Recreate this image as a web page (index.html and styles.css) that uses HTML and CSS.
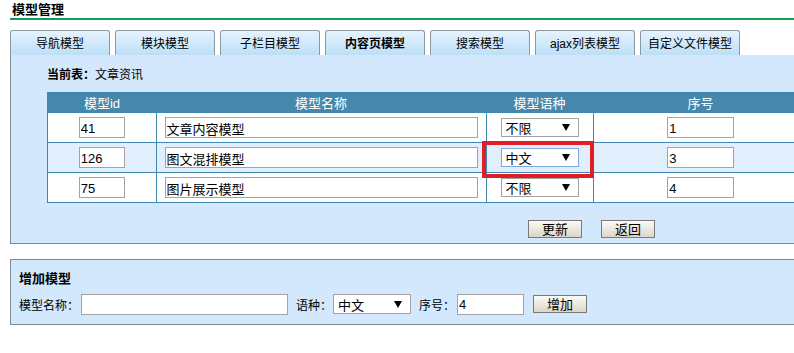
FILE: index.html
```html
<!DOCTYPE html>
<html lang="zh-CN">
<head>
    <meta charset="UTF-8">
    <meta name="viewport" content="width=device-width, initial-scale=1.0">
    <title>模型管理</title>
    <link rel="stylesheet" href="styles.css">
</head>
<body>
    <div class="page">
        <div class="title">模型管理</div>

        <div class="tabs">
            <div class="tab">导航模型</div>
            <div class="tab">模块模型</div>
            <div class="tab">子栏目模型</div>
            <div class="tab active">内容页模型</div>
            <div class="tab">搜索模型</div>
            <div class="tab">ajax列表模型</div>
            <div class="tab">自定义文件模型</div>
        </div>

        <div class="panel main-panel">
            <div class="current"><b>当前表：</b>文章资讯</div>

            <table class="grid">
                <tr>
                    <th class="c-id">模型id</th>
                    <th class="c-name">模型名称</th>
                    <th class="c-lang">模型语种</th>
                    <th class="c-seq">序号</th>
                </tr>
                <tr>
                    <td><input class="in-id" type="text" value="41"></td>
                    <td><input class="in-name" type="text" value="文章内容模型"></td>
                    <td><div class="select sel-row"><span>不限</span><svg width="8" height="7" viewBox="0 0 8 7"><path d="M0 0H8L4 7Z" fill="#000"/></svg></div></td>
                    <td><input class="in-seq" type="text" value="1"></td>
                </tr>
                <tr class="alt">
                    <td><input class="in-id" type="text" value="126"></td>
                    <td><input class="in-name" type="text" value="图文混排模型"></td>
                    <td class="marked">
                        <div class="select sel-row focus"><span>中文</span><svg width="8" height="7" viewBox="0 0 8 7"><path d="M0 0H8L4 7Z" fill="#000"/></svg></div>
                        <div class="red-box"></div>
                    </td>
                    <td><input class="in-seq" type="text" value="3"></td>
                </tr>
                <tr>
                    <td><input class="in-id" type="text" value="75"></td>
                    <td><input class="in-name" type="text" value="图片展示模型"></td>
                    <td><div class="select sel-row"><span>不限</span><svg width="8" height="7" viewBox="0 0 8 7"><path d="M0 0H8L4 7Z" fill="#000"/></svg></div></td>
                    <td><input class="in-seq" type="text" value="4"></td>
                </tr>
            </table>

            <div class="actions">
                <button class="btn">更新</button>
                <button class="btn">返回</button>
            </div>
        </div>

        <div class="panel add-panel">
            <div class="add-title">增加模型</div>
            <div class="add-row">
                <span>模型名称：</span>
                <input class="in-newname" type="text" value="">
                <span class="lbl">语种：</span>
                <div class="select sel-add"><span>中文</span><svg width="8" height="7" viewBox="0 0 8 7"><path d="M0 0H8L4 7Z" fill="#000"/></svg></div>
                <span class="lbl">序号：</span>
                <input class="in-newseq" type="text" value="4">
                <button class="btn btn-add">增加</button>
            </div>
        </div>
    </div>
</body>
</html>
```

FILE: styles.css
```css
body {
    margin: 0;
    font-family: "Liberation Sans", "Noto Sans CJK SC", sans-serif;
    font-size: 12px;
    color: #000;
    background-color: #fff;
    overflow: hidden;
}
.page {
    width: 860px;
    margin-left: 10px;
}
.title {
    height: 18px;
    line-height: 20px;
    padding-left: 2px;
    font-size: 13px;
    font-weight: bold;
    border-bottom: 2px solid #13985a;
}
.tabs {
    display: flex;
    gap: 5px;
    margin-top: 10px;
}
.tab {
    width: 98px;
    height: 24px;
    line-height: 26px;
    text-align: center;
    border: 1px solid #8c98a3;
    border-bottom: none;
    border-radius: 3px 3px 0 0;
    background: linear-gradient(#e6f3fd, #bcdff7);
}
.tab.active {
    font-weight: bold;
}
.panel {
    background-color: #d3e8fc;
    border-left: 1px solid #7f8790;
    border-bottom: 1px solid #7f8790;
}
.main-panel {
    padding: 10px 0 5px 36px;
}
.current {
    height: 20px;
    line-height: 20px;
    margin-bottom: 7px;
}
.grid {
    width: 762px;
    table-layout: fixed;
    border-collapse: collapse;
    border: 1px solid #3f88b4;
    font-size: 12px;
}
.grid th {
    height: 19px;
    padding: 0;
    background-color: #4588ab;
    color: #fff;
    font-weight: normal;
    font-size: 13px;
    text-align: center;
}
.grid td {
    height: 29px;
    padding: 0;
    text-align: center;
    background-color: #fff;
    border: 1px solid #3f88b4;
}
.grid tr.alt td {
    background-color: #e1effd;
}
.c-id { width: 108px; }
.c-name { width: 330px; }
.c-lang { width: 107px; }
input[type="text"] {
    box-sizing: border-box;
    height: 21px;
    padding: 1px 1px 0;
    border: 1px solid #a3a3a3;
    font-family: "Liberation Sans", "Noto Sans CJK SC", sans-serif;
    font-size: 13px;
    color: #000;
    background-color: #fff;
    vertical-align: middle;
}
.in-id { width: 46px; }
.in-name { width: 313px; }
.in-seq { width: 67px; }
.select {
    box-sizing: border-box;
    display: inline-flex;
    align-items: center;
    justify-content: space-between;
    height: 19px;
    padding: 0 8px 0 4px;
    border: 1px solid #a3a3a3;
    background-color: #fff;
    font-size: 13px;
    vertical-align: middle;
}
.sel-row { width: 78px; }
.select.focus {
    border-color: #7ea6d6;
}
.marked {
    position: relative;
}
.red-box {
    position: absolute;
    left: -5px;
    top: -2px;
    width: 104px;
    height: 29px;
    border: 4px solid #e11d27;
}
.actions {
    display: flex;
    gap: 19px;
    margin: 17px 0 0 481px;
}
.btn {
    width: 54px;
    height: 18px;
    padding: 0;
    border: 1px solid #7a7a7a;
    background: linear-gradient(#fbfaf6, #dcd6c8);
    font-family: "Liberation Sans", "Noto Sans CJK SC", sans-serif;
    font-size: 13px;
    line-height: 15px;
    color: #000;
}
.add-panel {
    margin-top: 15px;
    border-top: 1px solid #7f8790;
    padding: 7px 0 8px 8px;
}
.add-title {
    height: 24px;
    line-height: 24px;
    font-weight: bold;
    font-size: 13px;
}
.add-row {
    display: flex;
    align-items: center;
    height: 24px;
    margin-top: 1px;
}
.in-newname {
    width: 207px;
    margin-left: 2px;
}
.lbl {
    margin-left: 8px;
}
.sel-add {
    width: 78px;
    height: 20px;
    margin-left: 1px;
}
.in-newseq {
    width: 67px;
    margin-left: 2px;
}
.btn-add {
    margin-left: 9px;
}
```
